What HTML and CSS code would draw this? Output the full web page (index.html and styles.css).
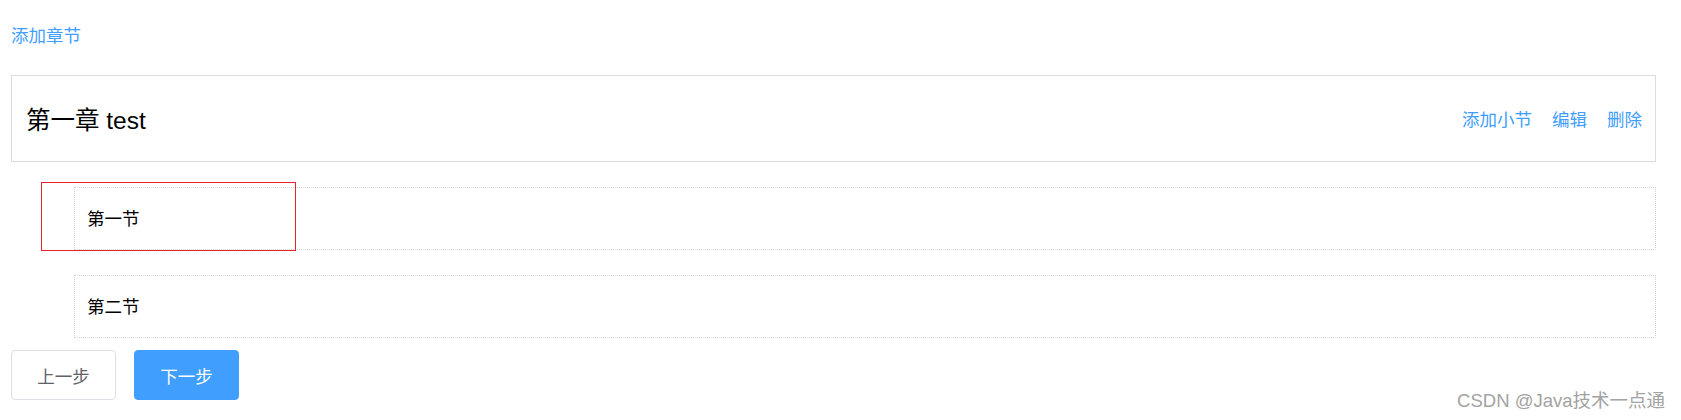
FILE: index.html
```html
<!doctype html>
<html lang="zh-CN">
<head>
  <meta charset="UTF-8">
  <title>章节</title>
  <link rel="stylesheet" href="styles.css">
</head>
<body>
  <div class="page">
    <a class="add-chapter" href="#">添加章节</a>

    <div class="chapter">
      <span class="chapter-title">第一章 test</span>
      <span class="actions">
        <a href="#">添加小节</a>
        <a href="#">编辑</a>
        <a href="#">删除</a>
      </span>
    </div>

    <ul class="sections">
      <li class="section">第一节<span class="mark"></span></li>
      <li class="section">第二节</li>
    </ul>

    <div class="steps">
      <button class="btn">上一步</button>
      <button class="btn btn-primary">下一步</button>
    </div>
  </div>

  <div class="watermark">CSDN @Java技术一点通</div>
</body>
</html>
```

FILE: styles.css
```css
*{margin:0;
  padding:0;
  list-style:none;
  box-sizing:border-box;}
body{font-family:"Liberation Sans","Noto Sans CJK SC",sans-serif;
     color:#000;
     background:#fff;}
a{text-decoration:none;
  color:#409eff;}
.page{padding:0 25px 0 11px;}
.add-chapter{display:block;
             margin-top:24px;
             line-height:24px;
             font-size:17.5px;}
.chapter{margin-top:27px;
         height:87px;
         border:1px solid #dcdcdc;
         display:flex;
         align-items:center;
         justify-content:space-between;
         padding:0 13px 0 14px;}
.chapter-title{font-size:24.5px;}
.actions{display:flex;
         gap:20px;
         font-size:17.5px;}
.sections{margin-left:63px;}
.section{position:relative;
         height:63px;
         margin-top:25px;
         border:1px dotted #d4d4d4;
         display:flex;
         align-items:center;
         padding:0 0 2px 12px;
         font-size:17.5px;}
.mark{position:absolute;
      left:-34px;
      top:-6px;
      width:255px;
      height:69px;
      border:1px solid #e8242b;}
.steps{display:flex;
       gap:18px;
       margin-top:12px;}
.btn{width:105px;
     height:50px;
     border:1px solid #dcdfe6;
     border-radius:4px;
     background:#fff;
     color:#606266;
     font-family:inherit;
     font-size:17.5px;}
.btn-primary{background:#409eff;
             border-color:#409eff;
             color:#fff;}
.watermark{position:absolute;
           right:16px;
           top:386px;
           font-size:18.5px;
           color:#a3a3a3;}
```
